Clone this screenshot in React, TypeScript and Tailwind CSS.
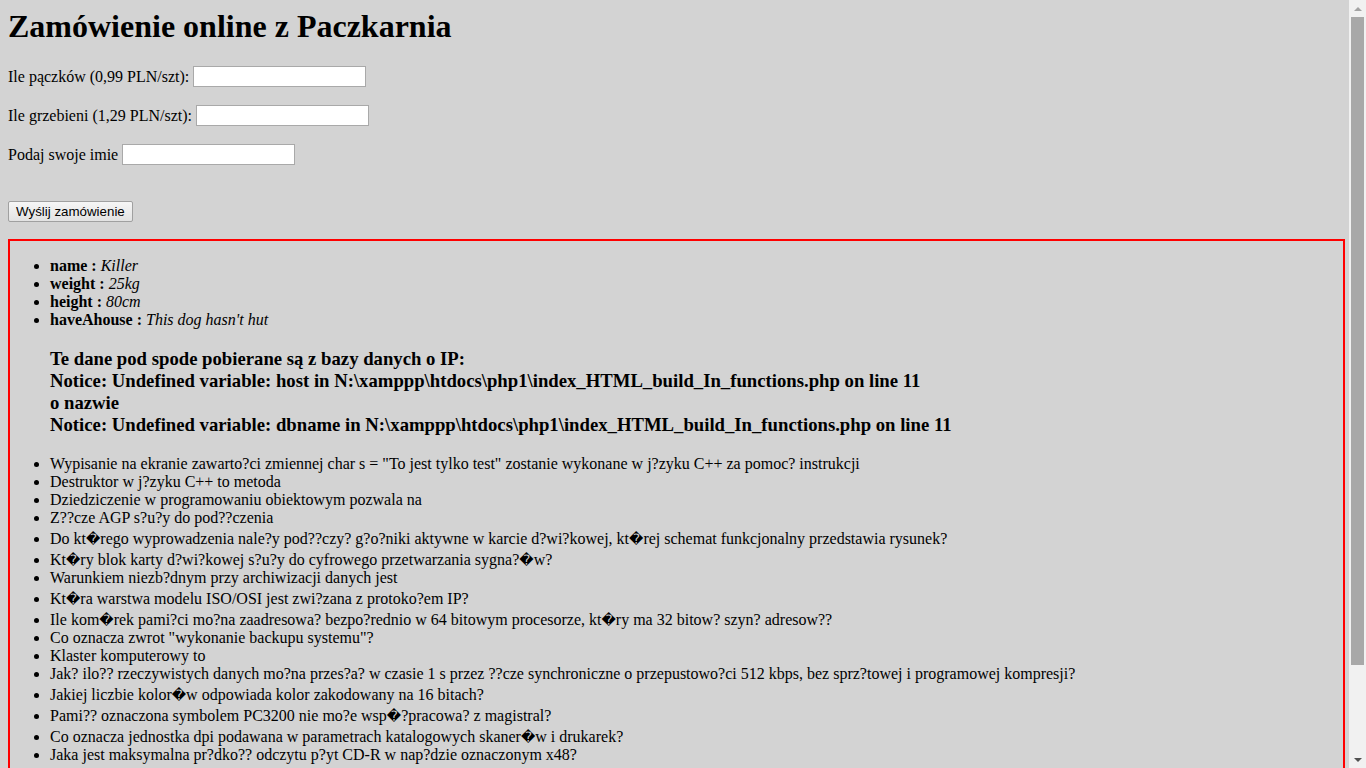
import React from "react";

const R = "\uFFFD";

type Item = { text: React.ReactNode; tall?: boolean };

const Bad = () => (
  <span className="font-['DejaVu_Sans'] text-[14px] leading-none">{R}</span>
);

const questions: Item[] = [
  { text: 'Wypisanie na ekranie zawarto?ci zmiennej char s = "To jest tylko test" zostanie wykonane w j?zyku C++ za pomoc? instrukcji' },
  { text: "Destruktor w j?zyku C++ to metoda" },
  { text: "Dziedziczenie w programowaniu obiektowym pozwala na" },
  { text: "Z??cze AGP s?u?y do pod??czenia" },
  { text: <>Do kt<Bad />rego wyprowadzenia nale?y pod??czy? g?o?niki aktywne w karcie d?wi?kowej, kt<Bad />rej schemat funkcjonalny przedstawia rysunek?</>, tall: true },
  { text: <>Kt<Bad />ry blok karty d?wi?kowej s?u?y do cyfrowego przetwarzania sygna?<Bad />w?</>, tall: true },
  { text: "Warunkiem niezb?dnym przy archiwizacji danych jest" },
  { text: <>Kt<Bad />ra warstwa modelu ISO/OSI jest zwi?zana z protoko?em IP?</>, tall: true },
  { text: <>Ile kom<Bad />rek pami?ci mo?na zaadresowa? bezpo?rednio w 64 bitowym procesorze, kt<Bad />ry ma 32 bitow? szyn? adresow??</>, tall: true },
  { text: 'Co oznacza zwrot "wykonanie backupu systemu"?' },
  { text: "Klaster komputerowy to" },
  { text: "Jak? ilo?? rzeczywistych danych mo?na przes?a? w czasie 1 s przez ??cze synchroniczne o przepustowo?ci 512 kbps, bez sprz?towej i programowej kompresji?" },
  { text: <>Jakiej liczbie kolor<Bad />w odpowiada kolor zakodowany na 16 bitach?</>, tall: true },
  { text: <>Pami?? oznaczona symbolem PC3200 nie mo?e wsp<Bad />?pracowa? z magistral?</>, tall: true },
  { text: <>Co oznacza jednostka dpi podawana w parametrach katalogowych skaner<Bad />w i drukarek?</>, tall: true },
  { text: "Jaka jest maksymalna pr?dko?? odczytu p?yt CD-R w nap?dzie oznaczonym x48?" },
];

const dog = [
  { k: "name", v: "Killer" },
  { k: "weight", v: "25kg" },
  { k: "height", v: "80cm" },
  { k: "haveAhouse", v: "This dog hasn't hut" },
];

const Field = ({ label, className }: { label: string; className: string }) => (
  <div className={`flex items-center h-[21px] ${className}`}>
    <span className="leading-[18px]">{label}</span>
    <input type="text" className="ml-[4px] w-[173px] h-[21px] bg-white border border-[#a9a9a9] outline-none" />
  </div>
);

export default function App() {
  return (
    <div className="flex w-[1366px] h-[768px] overflow-hidden bg-[#d3d3d3] font-['Liberation_Serif',serif] text-[16px] text-black">
      {/* page */}
      <div className="w-[1349px] h-[768px] overflow-hidden p-[8px] pr-0">
        <h1 className="text-[32px] font-bold leading-[37px]">Zamówienie online z Paczkarnia</h1>

        <Field label="Ile pączków (0,99 PLN/szt):" className="mt-[21px]" />
        <Field label="Ile grzebieni (1,29 PLN/szt):" className="mt-[18px]" />
        <Field label="Podaj swoje imie" className="mt-[18px]" />

        <button className="mt-[36px] h-[21px] px-[7px] rounded-[2px] border border-[#a0a0a0] bg-gradient-to-b from-[#f6f6f6] to-[#e2e2e2] font-['Liberation_Sans',sans-serif] text-[13.33px] leading-[15px] text-black">
          Wyślij zamówienie
        </button>

        <div className="mt-[16px] w-[1337px] border-2 border-[#ff0000]">
          <ul className="list-disc pl-[40px] my-[16px]">
            {dog.map((d) => (
              <li key={d.k} className="leading-[18px]">
                <b>{d.k} :</b> <i>{d.v}</i>
              </li>
            ))}
            <h3 className="text-[18.72px] font-bold leading-[22px] my-[19px]">
              Te dane pod spode pobierane są z bazy danych o IP:
              <br />
              Notice: Undefined variable: host in N:\xamppp\htdocs\php1\index_HTML_build_In_functions.php on line 11
              <br />
              o nazwie
              <br />
              Notice: Undefined variable: dbname in N:\xamppp\htdocs\php1\index_HTML_build_In_functions.php on line 11
            </h3>
            {questions.map((q, i) => (
              <li key={i} className={q.tall ? "leading-[18px] pt-[3px]" : "leading-[18px]"}>
                {q.text}
              </li>
            ))}
          </ul>
        </div>
      </div>

      {/* scrollbar */}
      <div className="w-[17px] h-[768px] bg-[#f1f1f1] flex flex-col">
        <div className="h-[17px] flex items-center justify-center">
          <svg width="8" height="4" viewBox="0 0 8 4">
            <path d="M4 0 L8 4 L0 4 Z" fill="#a3a3a3" />
          </svg>
        </div>
        <div className="h-[648px] ml-[2px] w-[13px] bg-[#a8a8a8]" />
        <div className="flex-1" />
        <div className="h-[17px] flex items-center justify-center">
          <svg width="8" height="4" viewBox="0 0 8 4">
            <path d="M0 0 L8 0 L4 4 Z" fill="#505050" />
          </svg>
        </div>
      </div>
    </div>
  );
}
